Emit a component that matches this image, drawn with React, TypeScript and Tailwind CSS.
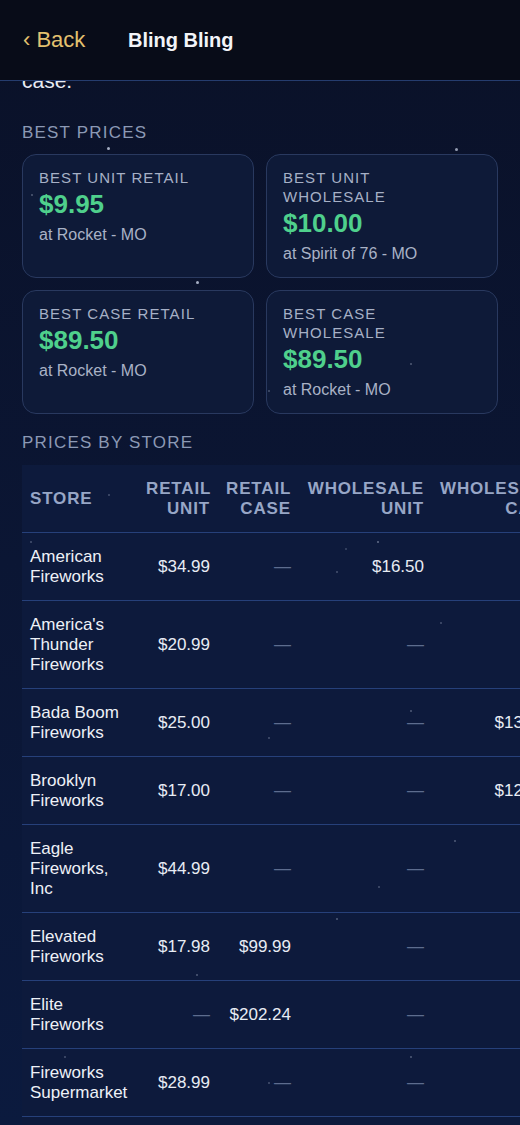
const bestPrices = [
  { label: 'Best Unit Retail', price: '$9.95', store: 'Rocket - MO' },
  { label: 'Best Unit Wholesale', price: '$10.00', store: 'Spirit of 76 - MO' },
  { label: 'Best Case Retail', price: '$89.50', store: 'Rocket - MO' },
  { label: 'Best Case Wholesale', price: '$89.50', store: 'Rocket - MO' },
];

type Row = {
  store: string;
  retailUnit?: string;
  retailCase?: string;
  wholesaleUnit?: string;
  wholesaleCase?: string;
};

const rows: Row[] = [
  { store: 'American Fireworks', retailUnit: '$34.99', wholesaleUnit: '$16.50' },
  { store: "America's Thunder Fireworks", retailUnit: '$20.99' },
  { store: 'Bada Boom Fireworks', retailUnit: '$25.00', wholesaleCase: '$134.99' },
  { store: 'Brooklyn Fireworks', retailUnit: '$17.00', wholesaleCase: '$125.00' },
  { store: 'Eagle Fireworks, Inc', retailUnit: '$44.99' },
  { store: 'Elevated Fireworks', retailUnit: '$17.98', retailCase: '$99.99' },
  { store: 'Elite Fireworks', retailCase: '$202.24' },
  { store: 'Fireworks Supermarket', retailUnit: '$28.99' },
  { store: 'Fireworks Warehouse', retailUnit: '$19.99' },
];

// background sparkles [x, y, size, opacity]
const stars: [number, number, number, number][] = [
  [107, 147, 3, 0.8], [455, 148, 3, 0.7], [31, 194, 2, 0.35], [196, 281, 3, 0.8],
  [64, 365, 2, 0.3], [410, 363, 2, 0.35], [268, 390, 2, 0.3], [108, 494, 2, 0.3],
  [30, 541, 2, 0.3], [377, 541, 2, 0.45], [345, 548, 2, 0.25], [336, 571, 2, 0.3],
  [440, 622, 2, 0.3], [410, 710, 2, 0.35], [268, 737, 2, 0.3], [454, 840, 2, 0.35],
  [378, 886, 2, 0.3], [336, 918, 2, 0.35], [196, 974, 2, 0.35], [64, 1056, 2, 0.3],
  [162, 1081, 2, 0.3], [410, 1056, 2, 0.35], [268, 1082, 2, 0.3],
];

function Cell({ value }: { value?: string }) {
  return (
    <td className="px-2 pt-[14px] pb-[13px] text-right align-middle whitespace-nowrap">
      {value ? value : <span className="text-[#5d6c8e]">—</span>}
    </td>
  );
}

export default function App() {
  return (
    <div className="relative h-[1125px] overflow-hidden bg-gradient-to-b from-[#0a1128] via-[#0b1634] to-[#0b1a3e] font-['Liberation_Sans',Arial,sans-serif] text-[#e8ecf4]">
      <header className="flex h-[81px] items-center border-b border-[#253c6e] bg-[#080c18] pl-[23px]">
        <button className="w-[105px] text-left text-[22px] leading-[28px] text-[#e3c16f]">‹ Back</button>
        <h1 className="text-[20px] font-bold leading-[28px] text-[#f2f4f8]">Bling Bling</h1>
      </header>

      <div className="px-[22px]">
        <div className="h-[14px] overflow-hidden">
          <p className="-mt-[14px] text-[21px] leading-[28px] text-[#e8ecf4]">case.</p>
        </div>

        <h2 className="mt-[28px] mb-[11px] text-[17px] leading-[20px] tracking-[0.07em] text-[#8c99b5] uppercase">
          Best Prices
        </h2>
        <div className="grid grid-cols-2 gap-3">
          {bestPrices.map((b) => (
            <div
              key={b.label}
              className="rounded-[14px] border border-[#29395f] bg-[#0e1a38] pl-4 pr-6 pt-[13px] pb-[13px]"
            >
              <div className="text-[15px] leading-[19px] tracking-[0.07em] text-[#a6b0c6] uppercase">{b.label}</div>
              <div className="mt-[2px] text-[26px] font-bold leading-[30px] text-[#4fd08c]">{b.price}</div>
              <div className="mt-[6px] text-base leading-[20px] text-[#a9b2c6]">at {b.store}</div>
            </div>
          ))}
        </div>

        <h2 className="mt-[19px] mb-3 text-[17px] leading-[20px] tracking-[0.07em] text-[#8c99b5] uppercase">
          Prices by Store
        </h2>
        <div className="-mr-[22px] overflow-hidden bg-[#0d1a3c]">
          <table className="w-[542px] table-fixed border-collapse text-[17px] leading-[20px]">
            <colgroup>
              <col className="w-[116px]" />
              <col className="w-[80px]" />
              <col className="w-[81px]" />
              <col className="w-[133px]" />
              <col className="w-[132px]" />
            </colgroup>
            <thead>
              <tr className="border-b border-[#26407a] text-[#97a6c6] font-bold uppercase tracking-[0.05em]">
                <th className="px-2 pt-[14px] pb-[13px] text-left align-middle">Store</th>
                <th className="px-2 pt-[14px] pb-[13px] text-right">Retail Unit</th>
                <th className="px-2 pt-[14px] pb-[13px] text-right">Retail Case</th>
                <th className="px-2 pt-[14px] pb-[13px] text-right">Wholesale Unit</th>
                <th className="px-2 pt-[14px] pb-[13px] text-right">Wholesale Case</th>
              </tr>
            </thead>
            <tbody>
              {rows.map((r) => (
                <tr key={r.store} className="border-b border-[#26407a]">
                  <td className="px-2 pt-[14px] pb-[13px] align-middle text-[#eef1f7]">{r.store}</td>
                  <Cell value={r.retailUnit} />
                  <Cell value={r.retailCase} />
                  <Cell value={r.wholesaleUnit} />
                  <Cell value={r.wholesaleCase} />
                </tr>
              ))}
            </tbody>
          </table>
        </div>
      </div>

      <div className="pointer-events-none absolute inset-0">
        {stars.map(([x, y, s, o], i) => (
          <span
            key={i}
            className="absolute rounded-full bg-[#cdd6ea]"
            style={{ left: x, top: y, width: s, height: s, opacity: o }}
          />
        ))}
      </div>
    </div>
  );
}
